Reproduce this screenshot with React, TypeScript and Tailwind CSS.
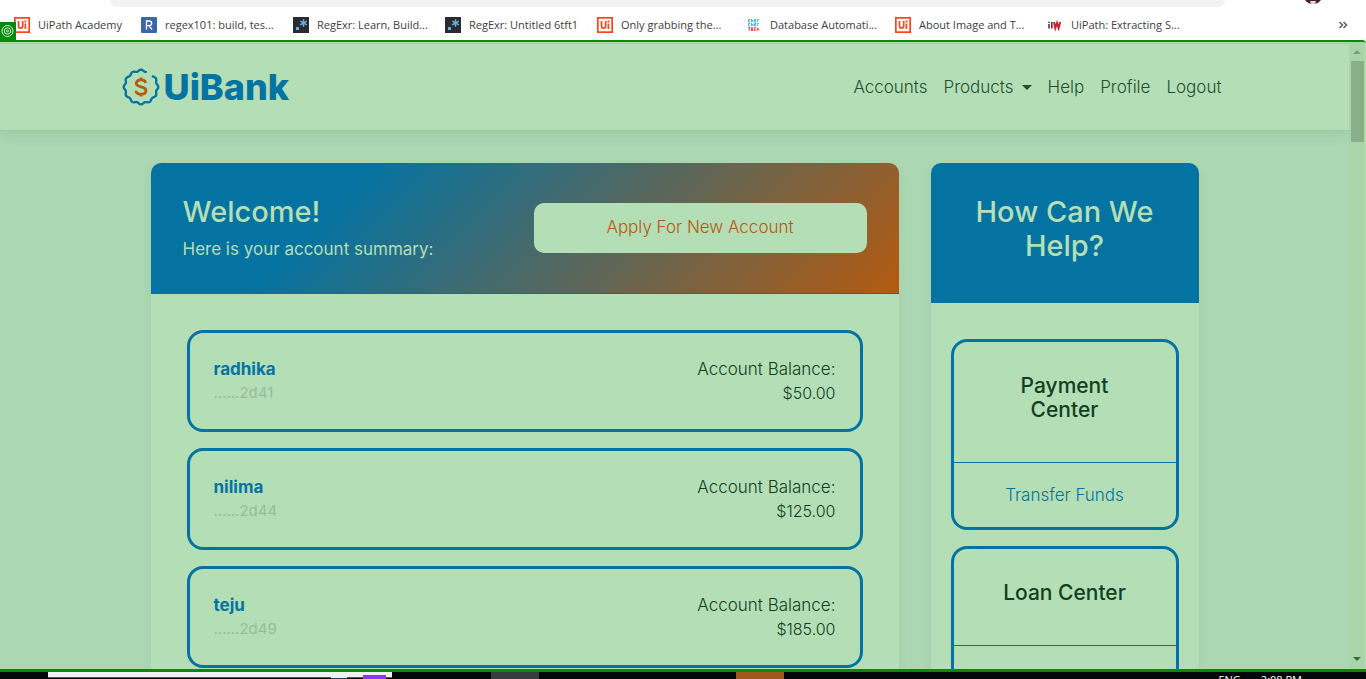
import type { ReactNode } from "react";

function UiIcon() {
  return (
    <svg viewBox="0 0 16 16" className="size-4 shrink-0" aria-hidden="true">
      <rect width="16" height="16" fill="#fa4616" />
      <rect x="1.7" y="1.7" width="12.6" height="12.6" fill="#fff" />
      <path d="M4.5 4v5q0 2.200 2.100 2.200T8.700 9V4M11.400 6.500V12" fill="none" stroke="#fa4616" strokeWidth="1.700" />
      <rect x="10.500" y="3.500" width="1.900" height="1.900" fill="#fa4616" />
    </svg>
  );
}

function RegexIcon() {
  return (
    <svg viewBox="0 0 16 16" className="size-4 shrink-0" aria-hidden="true">
      <rect width="16" height="16" rx="1" fill="#3b66a8" />
      <path d="M5.500 12.500V4H8q2.700 0 2.700 2.300T8 8.600H5.500M8 8.600l3 3.900" fill="none" stroke="#fff" strokeWidth="1.300" />
    </svg>
  );
}

function RegExrIcon() {
  return (
    <svg viewBox="0 0 16 16" className="size-4 shrink-0" aria-hidden="true">
      <rect width="16" height="16" fill="#282c30" />
      <rect x="3" y="10" width="3" height="3" rx="0.500" fill="#70b0e0" />
      <path d="M10.500 2.300v7.400M7.200 4.200l6.600 3.600M13.800 4.200L7.200 7.800" stroke="#70b0e0" strokeWidth="1.400" />
    </svg>
  );
}

function CherIcon() {
  return (
    <svg viewBox="0 0 16 16" className="size-4 shrink-0" fill="none" aria-hidden="true">
      <path d="M4.200 2.500H2.500v2.500h1.700M5.500 2v3M5.500 3.500h1.500V5M10 2.500H8.400V5H10M8.400 3.800H10M11.300 5V2.500h1.500" stroke="#35b8ea" strokeWidth="1" />
      <path d="M4.200 6.500H2.500V9h1.700M5.500 6v3M5.500 7.500h1.500V9M10 6.500H8.400V9H10M8.400 7.800H10M11.300 9V6.500h1.500" stroke="#35b8ea" strokeWidth="1" />
      <path d="M2 10.800h2.600M3.300 10.800v2.600M7 10.800H5.600v2.600H7M5.600 12.100H7M9.800 10.800H8.400v2.600h1.400M11.200 10.500v3M11.200 12h1.500v1.500" stroke="#f4504a" strokeWidth="1.100" />
    </svg>
  );
}

function IiwIcon() {
  return (
    <svg viewBox="0 0 16 16" className="size-4 shrink-0" aria-hidden="true">
      <path d="M2 7v4.500M4.800 5v6.500M2 4.800v1.200" stroke="#5b3038" strokeWidth="1.600" />
      <path d="M7 5l1.300 6L10 6l1.600 5L13.200 5" fill="none" stroke="#d0202e" strokeWidth="2" />
    </svg>
  );
}

const bookmarks: { icon: ReactNode; label: string; width: string }[] = [
  { icon: <UiIcon />, label: "UiPath Academy", width: "w-[87px]" },
  { icon: <RegexIcon />, label: "regex101: build, tes...", width: "w-28" },
  { icon: <RegExrIcon />, label: "RegExr: Learn, Build...", width: "w-28" },
  { icon: <RegExrIcon />, label: "RegExr: Untitled 6tft1", width: "w-28" },
  { icon: <UiIcon />, label: "Only grabbing the...", width: "w-[109px]" },
  { icon: <CherIcon />, label: "Database Automati...", width: "w-[109px]" },
  { icon: <UiIcon />, label: "About Image and T...", width: "w-28" },
  { icon: <IiwIcon />, label: "UiPath: Extracting S...", width: "w-28" },
];

function BrowserBar() {
  return (
    <div className="relative h-10 shrink-0 overflow-hidden bg-white font-['Open_Sans',sans-serif]">
      <div className="flex h-[7px] justify-between pl-[110px] pr-[45px]">
        <div className="mr-20 flex-1 rounded-b-2xl bg-[#f1f3f4]" />
        <svg viewBox="0 0 16 4" className="h-1 w-4" aria-hidden="true">
          <path d="M0 0h16q-3 4-8 4T0 0z" fill="#4a1e22" />
          <path d="M5 1h6l-1 3H6z" fill="#cfdde6" />
        </svg>
      </div>
      <div className="flex h-9 items-center pl-[14px] pr-[18px]">
        <nav className="flex flex-1 items-center gap-4" aria-label="Bookmarks">
          {bookmarks.map((b) => (
            <a key={b.label} href="#" className="flex items-center gap-2 whitespace-nowrap text-[11px] leading-4 text-[#3c4043]">
              {b.icon}
              <span className={b.width}>{b.label}</span>
            </a>
          ))}
        </nav>
        <button type="button" aria-label="More bookmarks">
          <svg viewBox="0 0 10 10" className="size-[10px]">
            <path d="M1.500 2l3 3-3 3M5.500 2l3 3-3 3" fill="none" stroke="#5f6368" strokeWidth="1.600" />
          </svg>
        </button>
      </div>
      <div className="absolute bottom-0 left-0 flex h-[18px] w-4 items-center justify-center bg-[#048a0c]">
        <svg viewBox="0 0 14 14" className="size-[14px]" fill="none" stroke="#d8f5d8">
          <circle cx="6.500" cy="7" r="5.500" />
          <circle cx="6.500" cy="7" r="3.200" />
          <circle cx="6.500" cy="7" r="1" />
        </svg>
      </div>
    </div>
  );
}

const badgePoints = Array.from({ length: 111 }, (_, i) => {
  const a = ((-42 + i * 3) * Math.PI) / 180;
  const r = 16.5 + 0.8 * Math.cos(12 * (a + Math.PI / 2));
  return `${(19 + r * Math.cos(a)).toFixed(2)},${(19 + r * Math.sin(a)).toFixed(2)}`;
}).join(" ");

function Logo() {
  return (
    <a href="#" className="flex items-center gap-1">
      <svg viewBox="0 0 38 38" className="size-[38px]" fill="none" aria-hidden="true">
        <polyline points={badgePoints} stroke="#0473a2" strokeWidth="2.300" strokeLinecap="round" strokeLinejoin="round" />
        <path d="M23.800 14.800q-.8-3-4.800-3t-4.800 3.300q0 2.800 4.800 3.700t4.900 3.900q0 3.500-4.900 3.500t-5-3.400M19 9.500v2.300M19 26v2.400" stroke="#b55c14" strokeWidth="2.800" />
      </svg>
      <span className="text-[36px] font-extrabold leading-10 text-[#0473a2]">UiBank</span>
    </a>
  );
}

function SiteHeader() {
  return (
    <div className="bg-[#b4deb5] pt-px">
      <header className="relative border-y border-[#9fcaa6] bg-[#b4deb5] shadow-[0_4px_12px_rgba(60,120,80,0.12)]">
        <div className="mx-auto flex h-[86px] max-w-[1110px] items-center justify-between pl-[2px] pr-2">
          <Logo />
          <nav className="flex gap-4 text-[17px] font-light leading-6 text-[#1f5030]">
            <a href="#">Accounts</a>
            <a href="#" className="flex items-center gap-2">
              Products
              <svg viewBox="0 0 10 5" className="h-[5px] w-[10px]" fill="#1f5030"><path d="M0 0h10L5 5z" /></svg>
            </a>
            <a href="#">Help</a>
            <a href="#">Profile</a>
            <a href="#">Logout</a>
          </nav>
        </div>
      </header>
    </div>
  );
}

const accounts = [
  { name: "radhika", id: "......2d41", balance: "$50.00" },
  { name: "nilima", id: "......2d44", balance: "$125.00" },
  { name: "teju", id: "......2d49", balance: "$185.00" },
];

function AccountsCard() {
  return (
    <section className="rounded-[10px] bg-[#b4deb5] shadow-[0_4px_10px_rgba(60,120,80,0.1)]">
      <div className="flex items-center justify-between rounded-t-[10px] border-b border-[#0473a2] bg-[linear-gradient(135deg,#0473a2_25%,#b55a10_100%)] p-8 text-[#b4deb5]">
        <div>
          <h1 className="mb-2 text-[29px] font-medium leading-[34px]">Welcome!</h1>
          <p className="text-[17px] leading-6">Here is your account summary:</p>
        </div>
        <button type="button" className="h-[50px] w-[333px] rounded-[10px] bg-[#b4deb5] text-[17px] font-light text-[#b55a10]">
          Apply For New Account
        </button>
      </div>
      <ul className="flex flex-col gap-4 p-9">
        {accounts.map((a) => (
          <li key={a.name} className="flex justify-between rounded-[16px] border-[3px] border-[#0473a2] p-6">
            <div>
              <a href="#" className="block text-[17px] font-bold leading-6 text-[#0473a2]">{a.name}</a>
              <p className="text-[15px] leading-6 text-[#93bf9a]">{a.id}</p>
            </div>
            <div className="text-right font-light text-[#12401f]">
              <p className="text-[17px] leading-6">Account Balance:</p>
              <p className="text-[16px] leading-6">{a.balance}</p>
            </div>
          </li>
        ))}
      </ul>
    </section>
  );
}

function HelpBox({ title, link }: { title: string; link?: string }) {
  return (
    <div className="rounded-[16px] border-[3px] border-[#0473a2] text-center">
      <h3 className="border-b border-[#0473a2] px-8 pb-10 pt-8 text-[21px] font-medium leading-6 text-[#12401f]">{title}</h3>
      <div className="min-h-16 py-5">
        {link && <a href="#" className="block text-[17px] font-light leading-6 text-[#0473a2]">{link}</a>}
      </div>
    </div>
  );
}

function HelpCard() {
  return (
    <section className="rounded-[10px] bg-[#b4deb5] shadow-[0_4px_10px_rgba(60,120,80,0.1)]">
      <h2 className="rounded-t-[10px] bg-[#0473a2] px-8 pb-10 pt-8 text-center text-[29px] font-medium leading-[34px] text-[#b4deb5]">
        How Can We Help?
      </h2>
      <div className="flex flex-col gap-4 px-5 py-9">
        <HelpBox title="Payment Center" link="Transfer Funds" />
        <HelpBox title="Loan Center" />
      </div>
    </section>
  );
}

function Scrollbar() {
  return (
    <div className="flex w-[17px] shrink-0 flex-col items-center border-r border-[#b4deb5] bg-[#aad5ab] py-2" aria-hidden="true">
      <svg viewBox="0 0 8 4" className="h-1 w-2" fill="#73a079"><path d="M0 4h8L4 0z" /></svg>
      <div className="mt-[7px] h-[81px] w-[13px] bg-[#87b088]" />
      <svg viewBox="0 0 8 4" className="mt-auto h-1 w-2" fill="#346b40"><path d="M0 0h8L4 4z" /></svg>
    </div>
  );
}

function Taskbar() {
  return (
    <div className="flex h-[7px] shrink-0 overflow-hidden bg-[#040609]">
      <div className="w-12" />
      <div className="flex h-[6px] w-[344px] justify-end gap-4 border-b border-[#555] bg-[#f1f1f1] pr-[6px] pt-[3px]">
        <div className="mt-px h-2 w-4 border-t-2 border-[#f1f1f1] bg-[#173a78]" />
        <div className="h-2 w-[23px] bg-[#9333ea]" />
      </div>
      <div className="ml-[99px] w-12 bg-[#3a3b3d]" />
      <div className="ml-[197px] w-12 bg-[#a0571c]" />
      <div className="ml-auto flex gap-5 pr-16 pt-[2px] font-['Open_Sans',sans-serif] text-[11px] leading-3 text-white">
        <span>ENG</span>
        <span>2:08 PM</span>
      </div>
    </div>
  );
}

export default function App() {
  return (
    <div className="flex h-screen flex-col overflow-hidden font-[Inter,sans-serif]">
      <BrowserBar />
      <div className="flex min-h-0 flex-1 overflow-hidden rounded-tr border-b-[3px] border-t-2 border-[#048a0c] bg-[#acd7b3]">
        <div className="min-w-0 flex-1 overflow-hidden">
          <SiteHeader />
          <main className="mx-auto grid max-w-[1048px] grid-cols-[minmax(0,748fr)_minmax(0,268fr)] gap-8 py-8">
            <AccountsCard />
            <HelpCard />
          </main>
        </div>
        <Scrollbar />
      </div>
      <Taskbar />
    </div>
  );
}
